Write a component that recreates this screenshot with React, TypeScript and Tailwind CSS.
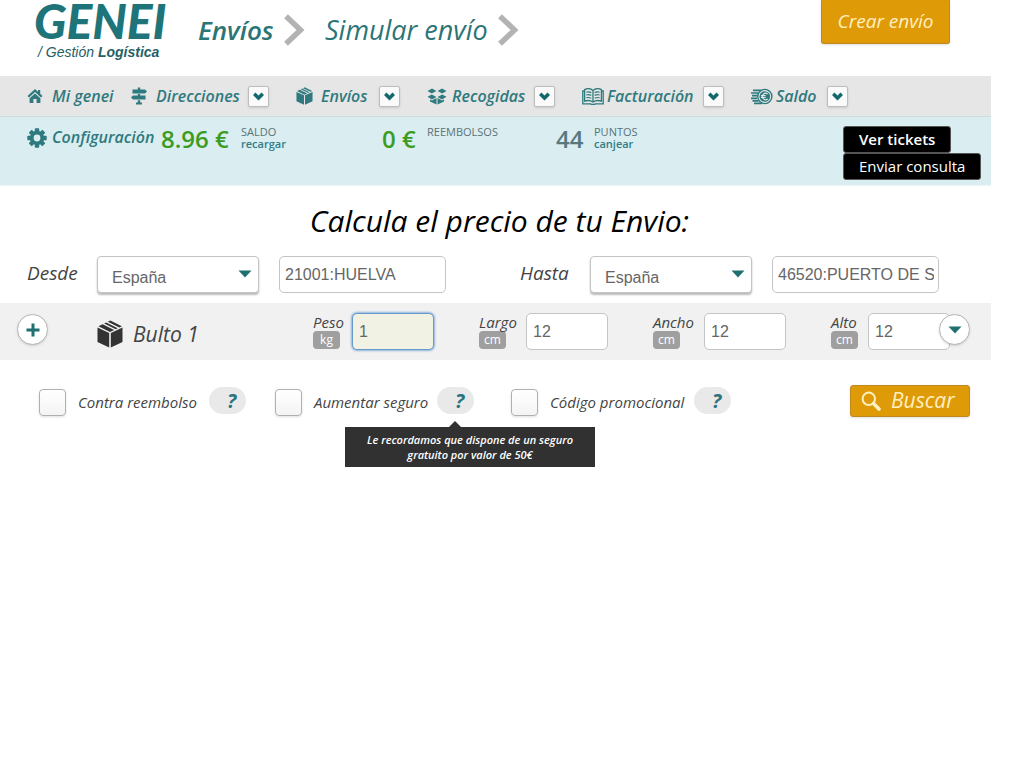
import type { ReactNode } from "react";

const serifless = "font-['Open_Sans','Noto_Sans',sans-serif]";
const arial = "font-['Liberation_Sans',Arial,sans-serif]";

function HomeIcon() {
  return (
    <svg viewBox="0 0 16 16" className="size-4" fill="currentColor" aria-hidden="true">
      <path d="M8 1 L0.5 8 L2 9.5 L8 4 L14 9.5 L15.5 8 L13.2 5.8 V2 H11 V3.8 Z" />
      <path d="M8 5.4 L2.6 10.3 V15 H6.4 V11 H9.6 V15 H13.4 V10.3 Z" />
    </svg>
  );
}

function SignsIcon() {
  return (
    <svg viewBox="0 0 16 18" className="h-[18px] w-4" fill="currentColor" aria-hidden="true">
      <path d="M6.8 0.5 H9.2 V2.5 H14 L16 4.5 L14 6.5 H1.5 V2.5 H6.8 Z" />
      <path d="M6.8 7 H9.2 V8.5 H14.5 V12.5 H2 L0 10.5 L2 8.5 H6.8 Z" />
      <path d="M6.8 13.2 H9.2 V15.5 H11 V17.5 H5 V15.5 H6.8 Z" />
    </svg>
  );
}

function BoxIcon({ className }: { className: string }) {
  return (
    <svg viewBox="0 0 26 28" className={className} fill="currentColor" aria-hidden="true">
      <path d="M0.5 7.6 L12.2 13 V27.6 L0.5 22 Z" />
      <path d="M25.5 7.6 L13.8 13 V27.6 L25.5 22 Z" />
      <path d="M1.4 6.3 L5.6 4.3 L17.1 10 L13 11.9 Z" />
      <path d="M7.2 3.5 L9.2 2.5 L20.7 8.2 L18.7 9.2 Z" />
      <path d="M10.8 1.8 L13.3 0.5 L24.8 6.3 L22.3 7.5 Z" />
    </svg>
  );
}

function OpenBoxIcon() {
  return (
    <svg viewBox="0 0 20 17" className="h-[17px] w-5" fill="currentColor" aria-hidden="true">
      <path d="M5 0.5 L9.4 3 L4.8 5.6 L0.5 3.1 Z" />
      <path d="M15 0.5 L10.6 3 L15.2 5.6 L19.5 3.1 Z" />
      <path d="M4.8 6.4 L9.4 9 L5 11.4 L0.5 8.8 Z" />
      <path d="M15.2 6.4 L10.6 9 L15 11.4 L19.5 8.8 Z" />
      <path d="M3 11.4 L5 12.6 L9.5 10.1 V16.6 L3 13.4 Z" />
      <path d="M17 11.4 L15 12.6 L10.5 10.1 V16.6 L17 13.4 Z" />
    </svg>
  );
}

function BookIcon() {
  return (
    <svg viewBox="0 0 22 17" className="h-[17px] w-[22px] shrink-0" fill="none" stroke="currentColor" aria-hidden="true">
      <path d="M11 2.4 C8.5 0.4 5 0.4 2.6 1.6 V13.2 C5.4 12.2 8.6 12.4 11 14 C13.4 12.4 16.6 12.2 19.4 13.2 V1.6 C17 0.4 13.5 0.4 11 2.4 Z M11 2.4 V14" strokeWidth="1.3" />
      <path d="M2.4 3 H0.8 V15.8 H8.5 Q11 17 13.5 15.8 H21.2 V3 H19.6" strokeWidth="1.3" />
      <path d="M4.3 4.2 Q6.8 3.4 9.3 4.6 M4.3 7 Q6.8 6.2 9.3 7.4 M4.3 9.8 Q6.8 9 9.3 10.2 M12.7 4.6 Q15.2 3.4 17.7 4.2 M12.7 7.4 Q15.2 6.2 17.7 7 M12.7 10.2 Q15.2 9 17.7 9.8" strokeWidth="1.2" />
    </svg>
  );
}

function CoinsIcon() {
  return (
    <svg viewBox="0 0 22 17" className="h-[17px] w-[22px] shrink-0" fill="none" stroke="currentColor" aria-hidden="true">
      <path d="M2 2.3 H10 M0 5 H7 M1 7.7 H6 M0 10.4 H6 M1.5 12.9 H7.5 M3 15.3 H11" strokeWidth="1.7" />
      <circle cx="13.8" cy="8.5" r="7.1" strokeWidth="1.4" />
      <circle cx="13.8" cy="8.5" r="5.3" fill="currentColor" stroke="none" />
      <path d="M16.6 6 A3.2 3.2 0 1 0 16.6 11 M10 7.6 H14.6 M10 9.5 H14.6" stroke="#e6e6e6" strokeWidth="1.2" />
    </svg>
  );
}

function GearIcon() {
  const angles = [0, 45, 90, 135];
  return (
    <svg viewBox="0 0 20 20" className="size-5" fill="currentColor" aria-hidden="true">
      {angles.map((a) => (
        <rect key={a} x="7.8" y="0.3" width="4.4" height="19.4" rx="0.8" transform={`rotate(${a} 10 10)`} />
      ))}
      <circle cx="10" cy="10" r="7.2" />
      <circle cx="10" cy="10" r="3.4" fill="#daedf1" />
    </svg>
  );
}

function SearchIcon() {
  return (
    <svg viewBox="0 0 20 20" className="size-5" fill="none" stroke="currentColor" aria-hidden="true">
      <circle cx="7.8" cy="7.8" r="6.2" strokeWidth="2" />
      <path d="M12.5 12.5 L18 18" strokeWidth="3.6" strokeLinecap="round" />
    </svg>
  );
}

function Triangle({ className = "" }: { className?: string }) {
  return (
    <svg viewBox="0 0 14 8" className={`h-2 w-3.5 ${className}`} fill="#1f7070" aria-hidden="true">
      <path d="M0.5 0.5 H13.5 L7 7.5 Z" />
    </svg>
  );
}

function Crumb() {
  return (
    <svg viewBox="0 0 22 32" className="h-8 w-[22px] shrink-0" fill="none" stroke="#b3b3b3" strokeWidth="5.5" aria-hidden="true">
      <path d="M3 2.2 L17.5 16 L3 29.8" />
    </svg>
  );
}

function NavItem({ icon, label, menu = true }: { icon: ReactNode; label: string; menu?: boolean }) {
  return (
    <li className="flex items-center">
      <a href="#" className="flex items-center">
        <span className="flex w-[25px] shrink-0">{icon}</span>
        {label}
      </a>
      {menu && (
        <button
          type="button"
          aria-label={`Abrir ${label}`}
          className="ml-auto flex size-[21px] shrink-0 items-center justify-center rounded-[2px] border border-[#bdbdbd] bg-[#fafafa] shadow-sm"
        >
          <svg viewBox="0 0 11 9" className="h-[9px] w-[11px]" fill="#12686b" aria-hidden="true">
            <path d="M0 3 L2.5 0.6 L5.5 3.4 L8.5 0.6 L11 3 L5.5 8.4 Z" />
          </svg>
        </button>
      )}
    </li>
  );
}

function Stat({ value, width, tone, title, link }: { value: string; width: string; tone: string; title: string; link?: string }) {
  return (
    <div className="flex">
      <span className={`text-2xl leading-[26px] font-semibold whitespace-nowrap ${width} ${tone}`}>{value}</span>
      <div className="text-[11px] leading-3 text-[#5a7378]">
        <div>{title}</div>
        {link && (
          <a href="#" className="font-semibold text-[#2f7d88]">
            {link}
          </a>
        )}
      </div>
    </div>
  );
}

function Place({ id, label, value }: { id: string; label: string; value: string }) {
  return (
    <div className="flex">
      <label htmlFor={`${id}-pais`} className="w-[70px] text-[19px] leading-[34px] text-[#444] italic">
        {label}
      </label>
      <div className="relative">
        <select
          id={`${id}-pais`}
          className={`${arial} h-[37px] w-[162px] appearance-none rounded-[4px] border border-[#c4c4c4] bg-white pt-1.5 pl-3.5 text-base text-[#666] shadow-[0_2px_2px_#bbb]`}
        >
          <option>España</option>
        </select>
        <Triangle className="pointer-events-none absolute top-3.5 right-[7px]" />
      </div>
      <input
        aria-label={`${label}: código postal`}
        defaultValue={value}
        className={`${arial} ml-5 h-[37px] w-[167px] rounded-[5px] border border-[#c4c4c4] bg-white pr-1 pl-[5px] text-base text-[#666]`}
      />
    </div>
  );
}

function Measure({ id, label, unit, value, width, active = false }: { id: string; label: string; unit: string; value: string; width: string; active?: boolean }) {
  return (
    <div className="flex">
      <label htmlFor={id} className={`${width} shrink-0 text-[#444]`}>
        <span className="block text-[15px] leading-[18px] italic">{label}</span>
        <span className="flex h-[18px] w-[27px] items-center justify-center rounded-[4px] bg-[#9f9f9f] text-xs text-white">
          {unit}
        </span>
      </label>
      <input
        id={id}
        defaultValue={value}
        className={`${arial} h-[37px] w-[82px] rounded-[5px] border px-1.5 text-base text-[#666] ${
          active ? "border-[#6699cc] bg-[#f1f1e4] shadow-[0_0_2px_1px_#8fb4dc]" : "border-[#c4c4c4] bg-white"
        }`}
      />
    </div>
  );
}

function Option({ id, label, width, tip }: { id: string; label: string; width: string; tip?: ReactNode }) {
  return (
    <div className={`flex items-start ${width}`}>
      <input
        id={id}
        type="checkbox"
        className="mt-0.5 size-[27px] shrink-0 appearance-none rounded-[4px] border border-[#b0b0b0] bg-linear-to-b from-white to-[#f4f4f4] shadow-sm"
      />
      <label htmlFor={id} className="ml-3 text-[15px] leading-[31px] whitespace-nowrap text-[#444] italic">
        {label}
      </label>
      <div className="relative ml-auto">
        <button
          type="button"
          aria-label={`Ayuda: ${label}`}
          className="flex h-[27px] w-[37px] items-center justify-center rounded-full bg-[#e9e9e9] pl-2 text-xl font-bold text-[#2c7380] italic"
        >
          ?
        </button>
        {tip}
      </div>
    </div>
  );
}

export default function App() {
  return (
    <div className={`${serifless} min-h-screen bg-white pr-[33px] text-black`}>
      <header className="flex h-[76px] items-start">
        <a href="#" className="ml-[34px] w-[164px] text-[#1f747a]">
          <span className="block font-['Lato',sans-serif] text-[48px] leading-[42px] font-black italic">GENEI</span>
          <span className={`${arial} block pl-1 text-sm leading-5 whitespace-nowrap text-[#266068] italic`}>
            / Gestión <b>Logística</b>
          </span>
        </a>
        <nav className="flex items-center pt-3 text-[27px] leading-9 whitespace-nowrap text-[#2b7577] italic" aria-label="Ruta">
          <a href="#" className="w-[85px] text-[26px] font-semibold">
            Envíos
          </a>
          <Crumb />
          <a href="#" className="ml-5 w-[172px]">
            Simular envío
          </a>
          <Crumb />
        </nav>
        <button
          type="button"
          className="mr-[41px] ml-auto h-11 w-[129px] rounded-b-[3px] border border-t-0 border-[#c08a1e] bg-[#df9a08] text-[19px] whitespace-nowrap text-[#fff0c0] italic shadow-sm"
        >
          Crear envío
        </button>
      </header>

      <nav className="h-[41px] border-b border-[#cfdcde] bg-[#e6e6e6] pl-[27px]" aria-label="Principal">
        <ul className="grid h-10 grid-cols-[77px_138px_104px_128px_142px_97px] gap-x-[27px] text-base font-semibold whitespace-nowrap text-[#2f7a7e] italic">
          <NavItem icon={<HomeIcon />} label="Mi genei" menu={false} />
          <NavItem icon={<SignsIcon />} label="Direcciones" />
          <NavItem icon={<BoxIcon className="h-[18px] w-[17px]" />} label="Envíos" />
          <NavItem icon={<OpenBoxIcon />} label="Recogidas" />
          <NavItem icon={<BookIcon />} label="Facturación" />
          <NavItem icon={<CoinsIcon />} label="Saldo" />
        </ul>
      </nav>

      <section className="flex h-[69px] items-start border-b border-[#edf4f5] bg-[#daedf1] pt-[9px] pl-[27px]">
        <a href="#" className="flex w-[134px] items-center text-base leading-5 font-semibold whitespace-nowrap text-[#2f7a7e] italic">
          <span className="w-[25px] shrink-0 pt-0.5">
            <GearIcon />
          </span>
          Configuración
        </a>
        <div className="grid grid-cols-[221px_174px_120px]">
          <Stat value="8.96 €" width="w-20" tone="text-[#3b9c20]" title="SALDO" link="recargar" />
          <Stat value="0 €" width="w-[45px]" tone="text-[#3b9c20]" title="REEMBOLSOS" />
          <Stat value="44" width="w-[38px]" tone="text-[#587880]" title="PUNTOS" link="canjear" />
        </div>
        <div className="mr-[11px] ml-auto flex w-[137px] flex-col items-start text-[15px] leading-6 whitespace-nowrap text-white">
          <button type="button" className="h-[27px] rounded-[3px] border border-[#555] bg-black px-[15px] pb-0.5 font-semibold">
            Ver tickets
          </button>
          <button type="button" className="h-[27px] rounded-[3px] border border-[#555] bg-black px-[15px] pb-0.5">
            Enviar consulta
          </button>
        </div>
      </section>

      <main>
        <h1 className="pt-[13px] pl-2 text-center text-[30px] leading-[44px] italic">Calcula el precio de tu Envio:</h1>

        <div className="mt-[13px] flex gap-[74px] pl-[27px]">
          <Place id="desde" label="Desde" value="21001:HUELVA" />
          <Place id="hasta" label="Hasta" value="46520:PUERTO DE SAGUNTO" />
        </div>

        <div className="mt-2.5 flex h-[57px] items-start bg-[#f1f1f1] pt-2.5 pl-[17px]">
          <button
            type="button"
            aria-label="Añadir bulto"
            className="mt-px flex size-[31px] items-center justify-center rounded-full border border-[#b5b5b5] bg-white shadow-sm"
          >
            <svg viewBox="0 0 14 14" className="size-3.5" stroke="#1f7070" strokeWidth="3" aria-hidden="true">
              <path d="M7 0.5 V13.5 M0.5 7 H13.5" />
            </svg>
          </button>
          <div className="ml-[49px] flex w-[216px] pt-[7px] text-[#333]">
            <BoxIcon className="h-7 w-[26px]" />
            <span className="ml-2.5 text-[21px] leading-7 text-[#444] italic">Bulto 1</span>
          </div>
          <div className="flex gap-[45px]">
            <Measure id="peso" label="Peso" unit="kg" value="1" width="w-[39px]" active />
            <Measure id="largo" label="Largo" unit="cm" value="12" width="w-[47px]" />
            <Measure id="ancho" label="Ancho" unit="cm" value="12" width="w-[51px]" />
            <Measure id="alto" label="Alto" unit="cm" value="12" width="w-[37px]" />
          </div>
          <button
            type="button"
            aria-label="Más opciones"
            className="z-10 mt-px -ml-[11px] flex size-[31px] shrink-0 items-center justify-center rounded-full border border-[#b5b5b5] bg-white shadow-sm"
          >
            <Triangle />
          </button>
        </div>

        <div className="mt-[25px] flex items-start pl-[39px]">
          <div className="flex gap-[29px] pt-0.5">
            <Option id="reembolso" label="Contra reembolso" width="w-[207px]" />
            <Option
              id="seguro"
              label="Aumentar seguro"
              width="w-[207px] pr-2"
              tip={
                <div
                  role="tooltip"
                  className="absolute top-10 -left-[92px] w-[250px] bg-[#313131] px-5 py-[5px] text-center text-[11px] leading-[15px] font-semibold text-white italic"
                >
                  <svg viewBox="0 0 12 6" className="absolute -top-1.5 left-[104px] h-1.5 w-3" fill="#313131" aria-hidden="true">
                    <path d="M0 6 L6 0 L12 6 Z" />
                  </svg>
                  Le recordamos que dispone de un seguro gratuito por valor de 50€
                </div>
              }
            />
            <Option id="codigo" label="Código promocional" width="w-[220px]" />
          </div>
          <button
            type="button"
            className="mr-[21px] ml-auto flex h-8 w-[120px] items-center rounded-[3px] border border-[#c08a1e] bg-[#df9a08] pl-2.5 text-[21px] text-[#fff0c0] italic shadow-sm"
          >
            <SearchIcon />
            <span className="ml-2.5">Buscar</span>
          </button>
        </div>
      </main>
    </div>
  );
}
